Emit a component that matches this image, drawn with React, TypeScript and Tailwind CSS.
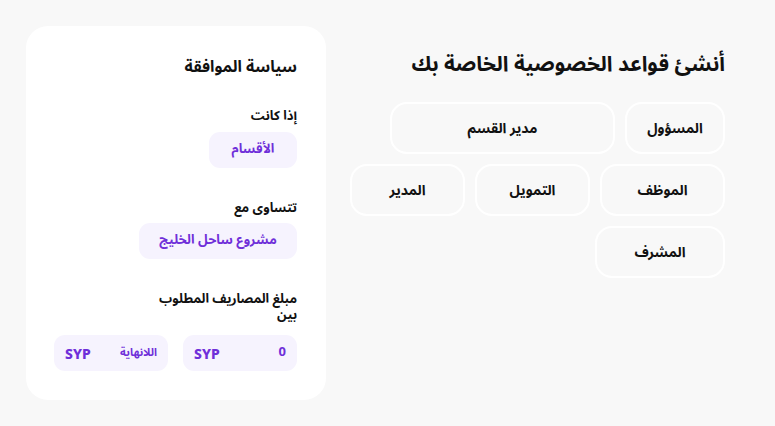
const roles = [
  { label: 'المسؤول', w: 'w-[100px]' },
  { label: 'مدير القسم', w: 'w-[225px]' },
  { label: 'الموظف', w: 'w-[125px]' },
  { label: 'التمويل', w: 'w-[115px]' },
  { label: 'المدير', w: 'w-[115px]' },
  { label: 'المشرف', w: 'w-[130px]' },
]

function Pill({ children, className = '' }: { children: React.ReactNode; className?: string }) {
  return (
    <div className={`h-[36px] rounded-[11px] bg-[#f6f3fe] text-[#6f2fd9] font-bold text-[13px] flex items-center ${className}`}>
      {children}
    </div>
  )
}

export default function App() {
  return (
    <div
      className="w-full h-[426px] bg-[#f8f8f8] flex items-start gap-[24px] pl-[26px] pr-[50px] pt-[26px]"
      style={{ fontFamily: '"Noto Sans Arabic", "DejaVu Sans", sans-serif' }}
    >
      {/* ── Card ── */}
      <div dir="rtl" className="w-[300px] h-[374px] bg-white rounded-[22px] pt-[30px] pr-[29px] pl-[29px] flex flex-col items-start">
        <h2 className="text-[16px] font-bold text-[#111] leading-[22px]">سياسة الموافقة</h2>

        <p className="mt-[28px] text-[13px] font-bold text-[#111] leading-[20px]">إذا كانت</p>
        <Pill className="mt-[6px] w-[88px] justify-center">الأقسام</Pill>

        <p className="mt-[30px] text-[13px] font-bold text-[#111] leading-[20px]">تتساوى مع</p>
        <Pill className="mt-[5px] w-[158px] justify-center">مشروع ساحل الخليج</Pill>

        <p className="mt-[32px] w-[145px] text-[13px] font-bold text-[#111] leading-[16px]">مبلغ المصاريف المطلوب بين</p>
        <div className="mt-[12px] flex gap-[15px]">
          <Pill className="w-[114px] justify-between px-[11px]">
            <span>0</span>
            <span className="font-sans font-extrabold text-[14px]">SYP</span>
          </Pill>
          <Pill className="w-[114px] justify-between px-[11px]">
            <span className="text-[11px]">اللانهاية</span>
            <span className="font-sans font-extrabold text-[14px]">SYP</span>
          </Pill>
        </div>
      </div>

      {/* ── Rules ── */}
      <div dir="rtl" className="flex-1 flex flex-col items-start">
        <h1 className="mt-[24px] text-[21px] font-bold text-[#111] leading-[28px]">أنشئ قواعد الخصوصية الخاصة بك</h1>
        <div className="mt-[24px] flex flex-wrap gap-[10px]">
          {roles.map((r) => (
            <button
              key={r.label}
              className={`${r.w} h-[52px] rounded-[17px] border-2 border-white text-[14px] font-bold text-[#111]`}
            >
              {r.label}
            </button>
          ))}
        </div>
      </div>
    </div>
  )
}
